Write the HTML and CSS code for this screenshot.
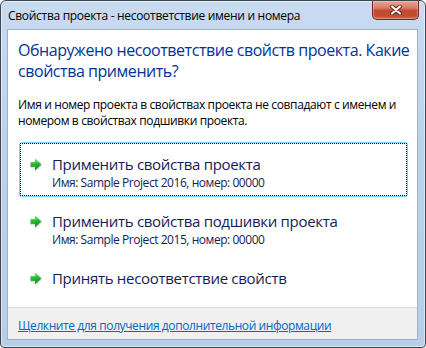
FILE: index.html
```html
<!DOCTYPE html>
<html lang="ru">
<head>
    <meta charset="UTF-8">
    <title>Свойства проекта - несоответствие имени и номера</title>
    <link rel="stylesheet" href="styles.css">
</head>
<body>
    <div class="window">
        <div class="titlebar">
            <span class="title">Свойства проекта - несоответствие имени и номера</span>
            <button class="close" aria-label="Закрыть">
                <svg width="14" height="10" viewBox="0 0 14 10">
                    <path d="M3 1.5 L11 8.5 M11 1.5 L3 8.5" stroke="#5a2418" stroke-width="4" stroke-linecap="round"/>
                    <path d="M3 1.5 L11 8.5 M11 1.5 L3 8.5" stroke="#fff" stroke-width="2.2" stroke-linecap="round"/>
                </svg>
            </button>
        </div>

        <div class="dialog">
            <div class="main">
                <h1 class="instruction">Обнаружено несоответствие свойств проекта. Какие<br>свойства применить?</h1>
                <p class="content">Имя и номер проекта в свойствах проекта не совпадают с именем и<br>номером в свойствах подшивки проекта.</p>

                <div class="commands">
                    <a href="#" class="command focused">
                        <span class="arrow"><svg width="14" height="13" viewBox="0 0 14 13"><defs><linearGradient id="g1" x1="0" y1="0" x2="0.2" y2="1"><stop offset="0" stop-color="#8ae880"/><stop offset="0.45" stop-color="#2cc132"/><stop offset="1" stop-color="#0c8a18"/></linearGradient></defs><path d="M2 5 H6.5 V2 L12 7 L6.5 12 V9 H2 Z" fill="none" stroke="#000" stroke-opacity="0.12" stroke-width="2.4" stroke-linejoin="round"/><path d="M2 4.5 H6.5 V1.5 L12 6.5 L6.5 11.5 V8.5 H2 Z" fill="url(#g1)" stroke="url(#g1)" stroke-width="0.8" stroke-linejoin="round"/></svg></span>
                        <span class="text">
                            <span class="cmd-title">Применить свойства проекта</span>
                            <span class="cmd-note">Имя: Sample Project 2016, номер: 00000</span>
                        </span>
                    </a>
                    <a href="#" class="command">
                        <span class="arrow"><svg width="14" height="13" viewBox="0 0 14 13"><path d="M2 5 H6.5 V2 L12 7 L6.5 12 V9 H2 Z" fill="none" stroke="#000" stroke-opacity="0.12" stroke-width="2.4" stroke-linejoin="round"/><path d="M2 4.5 H6.5 V1.5 L12 6.5 L6.5 11.5 V8.5 H2 Z" fill="url(#g1)" stroke="url(#g1)" stroke-width="0.8" stroke-linejoin="round"/></svg></span>
                        <span class="text">
                            <span class="cmd-title">Применить свойства подшивки проекта</span>
                            <span class="cmd-note">Имя: Sample Project 2015, номер: 00000</span>
                        </span>
                    </a>
                    <a href="#" class="command">
                        <span class="arrow"><svg width="14" height="13" viewBox="0 0 14 13"><path d="M2 5 H6.5 V2 L12 7 L6.5 12 V9 H2 Z" fill="none" stroke="#000" stroke-opacity="0.12" stroke-width="2.4" stroke-linejoin="round"/><path d="M2 4.5 H6.5 V1.5 L12 6.5 L6.5 11.5 V8.5 H2 Z" fill="url(#g1)" stroke="url(#g1)" stroke-width="0.8" stroke-linejoin="round"/></svg></span>
                        <span class="text">
                            <span class="cmd-title">Принять несоответствие свойств</span>
                        </span>
                    </a>
                </div>
            </div>

            <div class="footer">
                <a href="#">Щелкните для получения дополнительной информации</a>
            </div>
        </div>
    </div>
</body>
</html>
```

FILE: styles.css
```css
body {
    margin: 0;
    font-family: "Open Sans", "Noto Sans", Arial, sans-serif;
    background: #fff;
}

.window {
    width: 426px;
    height: 348px;
    box-sizing: border-box;
    display: flex;
    flex-direction: column;
    padding: 0 7px 7px 6px;
    border: 1px solid #3b4654;
    border-radius: 6px 6px 4px 4px;
    background: linear-gradient(to bottom, #c9dbf1, #bcd2ec 40%, #b7cde8);
    box-shadow: inset 0 0 0 1px rgba(255, 255, 255, 0.55);
}

.titlebar {
    display: flex;
    align-items: flex-start;
    height: 28px;
    flex-shrink: 0;
}

.title {
    font-size: 12px;
    line-height: 16px;
    letter-spacing: -0.3px;
    color: #000;
    padding: 7px 0 0 1px;
    white-space: nowrap;
}

.close {
    margin-left: auto;
    margin-right: -1px;
    width: 47px;
    height: 19px;
    padding: 0;
    border: 1px solid #6a2a20;
    border-top: none;
    border-radius: 0 0 5px 5px;
    background: linear-gradient(to bottom, #e8a798 0%, #d67a66 40%, #c34a33 52%, #c6492f 80%, #d76b4c 100%);
    box-shadow: inset 0 0 0 1px rgba(255, 220, 210, 0.35);
    display: flex;
    align-items: center;
    justify-content: center;
}

.dialog {
    flex: 1;
    display: flex;
    flex-direction: column;
    background: #fff;
    border: 1px solid #9fb1c7;
}

.main {
    flex: 1;
    padding: 10px 10px 0 10px;
}

.instruction {
    margin: 0;
    font-size: 16px;
    line-height: 21px;
    letter-spacing: -0.45px;
    font-weight: normal;
    color: #003399;
    white-space: nowrap;
}

.content {
    margin: 15px 0 0;
    font-size: 12px;
    line-height: 16px;
    letter-spacing: -0.37px;
    color: #000;
    white-space: nowrap;
}

.commands {
    display: flex;
    flex-direction: column;
    gap: 2px;
    margin: 13px 0 0 1px;
    width: 389px;
}

.command {
    position: relative;
    display: flex;
    align-items: flex-start;
    gap: 9px;
    padding: 10px 8px 5px 9px;
    border: 1px solid transparent;
    border-radius: 3px;
    color: #151c55;
    text-decoration: none;
}

.command.focused {
    border-color: #6fd4f6;
    box-shadow: inset 0 0 0 1px #dff5fd;
}

.command.focused::after {
    content: "";
    position: absolute;
    top: 1px;
    left: 1px;
    right: 1px;
    bottom: 1px;
    outline: 1px dotted #000;
}

.arrow {
    width: 14px;
    height: 22px;
    display: flex;
    align-items: center;
}

.text {
    display: flex;
    flex-direction: column;
}

.cmd-title {
    font-size: 15px;
    line-height: 22px;
    letter-spacing: -0.3px;
    white-space: nowrap;
}

.cmd-note {
    font-size: 12px;
    line-height: 16px;
    letter-spacing: -0.45px;
    white-space: nowrap;
}

.footer {
    flex-shrink: 0;
    height: 32px;
    box-sizing: border-box;
    padding: 5px 10px 0;
    background: #f0f0f0;
    border-top: 1px solid #dfdfdf;
}

.footer a {
    font-size: 12px;
    line-height: 16px;
    letter-spacing: -0.4px;
    color: #0066cc;
    text-decoration: underline;
}
```
